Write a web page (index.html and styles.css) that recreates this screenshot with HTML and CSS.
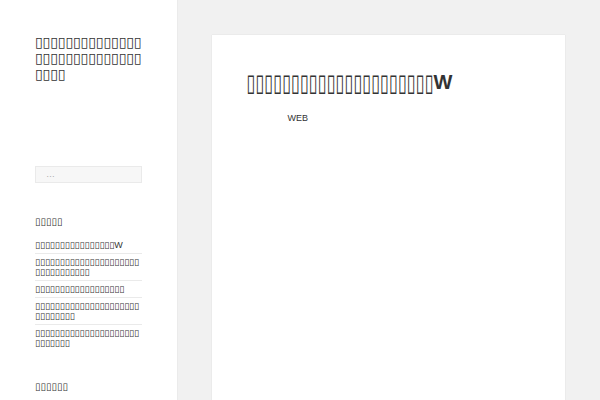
FILE: index.html
```html
<!DOCTYPE html>
<html lang="ja">
<head>
<meta charset="utf-8">
<title>site</title>
<link rel="stylesheet" href="styles.css">
</head>
<body>
<div class="page">
  <aside class="sidebar">
    <h1 class="site-title">▯▯▯▯▯▯▯▯▯▯▯▯▯▯▯▯▯▯▯▯▯▯▯▯▯▯▯▯▯▯▯▯</h1>
    <div class="search"><span class="placeholder">…</span></div>
    <section class="widget">
      <h2 class="widget-title">▯▯▯▯▯</h2>
      <ul class="posts">
        <li>▯▯▯▯▯▯▯▯▯▯▯▯▯▯▯▯W</li>
        <li>▯▯▯▯▯▯▯▯▯▯▯▯▯▯▯▯▯▯▯▯▯▯▯▯▯▯▯▯▯▯▯▯</li>
        <li>▯▯▯▯▯▯▯▯▯▯▯▯▯▯▯▯▯▯</li>
        <li>▯▯▯▯▯▯▯▯▯▯▯▯▯▯▯▯▯▯▯▯▯▯▯▯▯▯▯▯▯</li>
        <li>▯▯▯▯▯▯▯▯▯▯▯▯▯▯▯▯▯▯▯▯▯▯▯▯▯▯▯▯</li>
      </ul>
    </section>
    <section class="widget widget-second">
      <h2 class="widget-title">▯▯▯▯▯▯</h2>
    </section>
  </aside>
  <main class="main">
    <article class="post">
      <h1 class="entry-title"><span class="boxes">▯▯▯▯▯▯▯▯▯▯▯▯▯▯▯▯▯▯▯▯▯</span>W</h1>
      <p class="entry-content">WEB</p>
    </article>
  </main>
</div>
</body>
</html>
```
FILE: styles.css
```css
html, body {
  margin: 0;
  padding: 0;
}
body {
  background: #f1f1f1;
  font-family: "Liberation Sans", "DejaVu Sans", sans-serif;
  color: #333;
}
.page {
  display: flex;
  min-height: 400px;
}
.sidebar {
  width: 176.5px;
  flex: none;
  box-sizing: border-box;
  background: #fff;
  box-shadow: 0 0 1px rgba(0,0,0,0.15);
  padding: 34px 35px 0 35px;
  height: 400px;
  overflow: hidden;
}
.site-title {
  margin: 0;
  font-size: 14px;
  letter-spacing: -0.1px;
  line-height: 16px;
  font-weight: 700;
  color: #333;
  overflow-wrap: anywhere;
  word-break: break-all;
}
.search {
  margin-top: 84px;
  height: 17px;
  box-sizing: border-box;
  background: #f7f7f7;
  border: 1px solid #eaeaea;
  padding-left: 10px;
  font-size: 9px;
  line-height: 15px;
  color: #aaa;
}
.widget { margin-top: 33px; }
.widget-second { margin-top: 30px; }
.widget-title {
  margin: 0 0 9px;
  font-size: 10px;
  line-height: 12px;
  font-weight: 700;
  color: #333;
}
.posts {
  list-style: none;
  margin: 0;
  padding: 0;
  font-size: 9px;
  line-height: 10px;
  color: #333;
  overflow-wrap: anywhere;
  word-break: break-all;
}
.posts li {
  padding: 3px 0;
}
.posts li + li {
  border-top: 1px solid #eaeaea;
}
.main {
  flex: 1;
  min-width: 0;
  padding: 35px 35px 0;
}
.post {
  background: #fff;
  box-shadow: 0 0 1px rgba(0,0,0,0.15);
  padding: 35px;
  min-height: 400px;
}
.entry-title {
  margin: 0;
  font-size: 20px;
  line-height: 24px;
  font-weight: 700;
  color: #333;
  overflow-wrap: anywhere;
}
.boxes {
  display: inline-block;
  font-size: 16.2px;
  transform: translateY(-1px) scaleY(1.5);
}
.entry-content {
  margin: 16px 0 0 41px;
  font-size: 9px;
  line-height: 14px;
  color: #333;
}
```
